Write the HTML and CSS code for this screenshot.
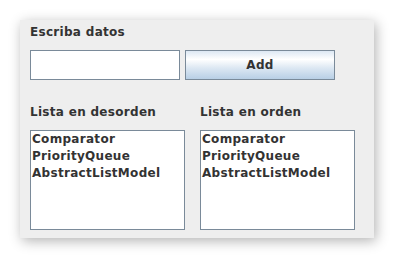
FILE: index.html
```html
<!DOCTYPE html>
<html lang="es">
<head>
    <meta charset="UTF-8">
    <title>Listas</title>
    <link rel="stylesheet" href="styles.css">
</head>
<body>
    <div class="window">
        <div class="label">Escriba datos</div>
        <div class="input-row">
            <input type="text" class="field">
            <button class="btn">Add</button>
        </div>
        <div class="lists">
            <div class="list-col">
                <div class="label">Lista en desorden</div>
                <ul class="list">
                    <li>Comparator</li>
                    <li>PriorityQueue</li>
                    <li>AbstractListModel</li>
                </ul>
            </div>
            <div class="list-col">
                <div class="label">Lista en orden</div>
                <ul class="list">
                    <li>Comparator</li>
                    <li>PriorityQueue</li>
                    <li>AbstractListModel</li>
                </ul>
            </div>
        </div>
    </div>
</body>
</html>
```
FILE: styles.css
```css
* {
    margin: 0;
    padding: 0;
    box-sizing: border-box;
    font-family: 'DejaVu Sans', sans-serif;
}

body {
    background: #ffffff;
    padding: 20px;
}

.window {
    width: 354px;
    height: 218px;
    background: #eeeeee;
    padding: 5px 10px 0 10px;
    box-shadow: 2px 3px 12px rgba(0,0,0,0.3);
}

.label {
    font-size: 12px;
    font-weight: bold;
    line-height: 15px;
    letter-spacing: 0.3px;
    color: #333333;
}

.input-row {
    display: flex;
    gap: 5px;
    margin-top: 10px;
}

.field {
    width: 150px;
    height: 30px;
    border: 1px solid #7a8a99;
    background: white;
    outline: none;
}

.btn {
    width: 150px;
    height: 30px;
    border: 1px solid #7a8a99;
    background: linear-gradient(to bottom, #dde8f3 0%, #ffffff 30%, #dde8f3 60%, #b8cfe5 100%);
    font-size: 12px;
    font-weight: bold;
    letter-spacing: 0.3px;
    color: #333333;
}

.lists {
    display: flex;
    gap: 15px;
    margin-top: 25px;
}

.list {
    list-style: none;
    width: 155px;
    height: 100px;
    margin-top: 10px;
    border: 1px solid #7a8a99;
    background: white;
    padding-left: 1px;
}

.list li {
    font-size: 12px;
    font-weight: bold;
    line-height: 17px;
    letter-spacing: 0.3px;
    color: #333333;
}
```
